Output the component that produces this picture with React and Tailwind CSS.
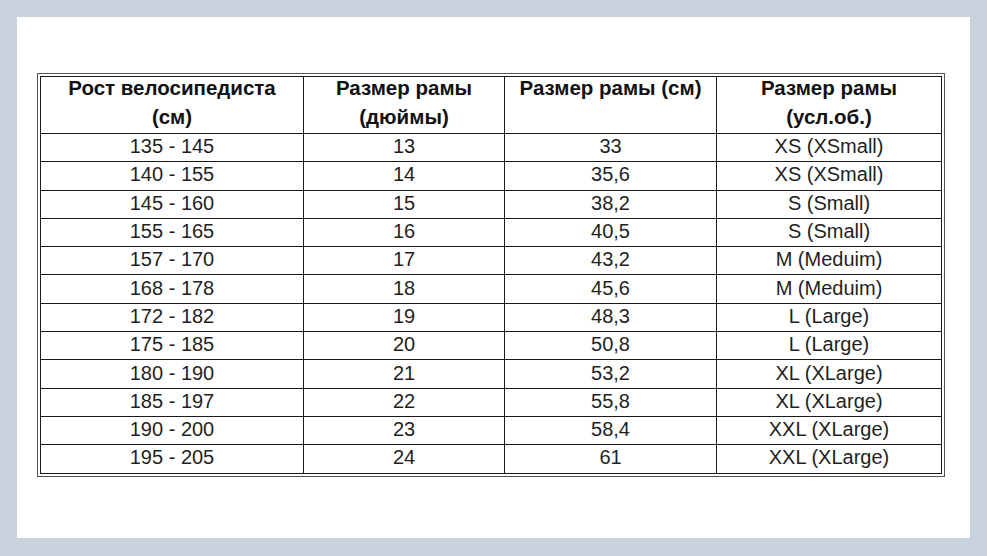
const rows = [
  ["135 - 145", "13", "33", "XS (XSmall)"],
  ["140 - 155", "14", "35,6", "XS (XSmall)"],
  ["145 - 160", "15", "38,2", "S (Small)"],
  ["155 - 165", "16", "40,5", "S (Small)"],
  ["157 - 170", "17", "43,2", "M (Meduim)"],
  ["168 - 178", "18", "45,6", "M (Meduim)"],
  ["172 - 182", "19", "48,3", "L (Large)"],
  ["175 - 185", "20", "50,8", "L (Large)"],
  ["180 - 190", "21", "53,2", "XL (XLarge)"],
  ["185 - 197", "22", "55,8", "XL (XLarge)"],
  ["190 - 200", "23", "58,4", "XXL (XLarge)"],
  ["195 - 205", "24", "61", "XXL (XLarge)"],
];

const headers = [
  ["Рост велосипедиста", "(см)"],
  ["Размер рамы", "(дюймы)"],
  ["Размер рамы (см)"],
  ["Размер рамы", "(усл.об.)"],
];

export default function App() {
  return (
    <div className="w-[987px] h-[556px] bg-[#c9d3dd] p-[17px] pb-[18px] font-['Liberation_Sans',Arial,sans-serif]">
      <div className="w-full h-full bg-white pt-[56px] pl-[20px]">
        <div className="w-[908px] border border-[#555] p-[2px]">
          <table className="w-full table-fixed border-collapse border border-[#1a1a1a]">
            <colgroup>
              <col className="w-[263px]" />
              <col className="w-[201px]" />
              <col className="w-[212px]" />
              <col />
            </colgroup>
            <thead>
              <tr className="h-[57px]">
                {headers.map((h, i) => (
                  <th
                    key={i}
                    className="border border-[#1a1a1a] align-top p-0 text-[20.5px] font-bold leading-[29px] text-[#111]"
                  >
                    <div className="-mt-[4px]">
                      {h.map((line, j) => (
                        <div key={j}>{line}</div>
                      ))}
                    </div>
                  </th>
                ))}
              </tr>
            </thead>
            <tbody>
              {rows.map((r, i) => (
                <tr key={i} className="h-[28.3px]">
                  {r.map((c, j) => (
                    <td
                      key={j}
                      className="border border-[#1a1a1a] p-0 text-center text-[20px] leading-[22px] text-[#1f1f1f]"
                    >
                      <div className="-mt-[3px]">{c}</div>
                    </td>
                  ))}
                </tr>
              ))}
            </tbody>
          </table>
        </div>
      </div>
    </div>
  );
}
